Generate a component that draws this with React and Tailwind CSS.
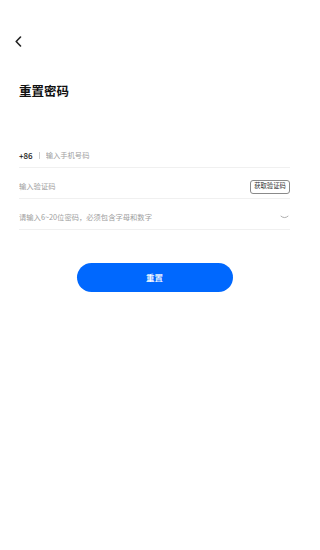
import { useState } from 'react';

const font = { fontFamily: '"Noto Sans CJK SC", "Noto Sans", sans-serif' };

function EyeClosed() {
  return (
    <svg width="9" height="5" viewBox="0 0 9 5" fill="none">
      <path d="M1 1.2 Q4.5 4.2 8 1.2" stroke="#9a9a9a" strokeWidth="0.8" strokeLinecap="round" />
    </svg>
  );
}

export default function App() {
  const [phone, setPhone] = useState('');
  const [code, setCode] = useState('');
  const [password, setPassword] = useState('');

  return (
    <div className="w-[309px] h-[550px] bg-white" style={font}>
      <div className="pt-[36px] pl-[14px]">
        <svg width="9" height="11" viewBox="0 0 9 11" fill="none">
          <path d="M6.5 1 L2.2 5.5 L6.5 10" stroke="#222" strokeWidth="1.6" strokeLinecap="round" strokeLinejoin="round" />
        </svg>
      </div>

      <h1 className="mt-[35px] ml-[19px] text-[12.5px] leading-[18px] font-bold text-[#111]">重置密码</h1>

      <div className="mx-[19px] mt-[37px] w-[271px]">
        {/* Phone */}
        <div className="h-[31px] pt-[7px] flex items-center border-b border-[#f0f0f0]">
          <span className="text-[8px] text-[#1a1a1a] font-medium">+86</span>
          <span className="mx-[6px] h-[7px] w-px bg-[#cfcfcf]"></span>
          <input
            value={phone}
            onChange={e => setPhone(e.target.value)}
            placeholder="输入手机号码"
            className="flex-1 text-[7.3px] text-[#222] placeholder:text-[#a0a0a0] outline-none bg-transparent"
          />
        </div>

        {/* Code */}
        <div className="h-[31px] pt-[7px] flex items-center border-b border-[#f0f0f0]">
          <input
            value={code}
            onChange={e => setCode(e.target.value)}
            placeholder="输入验证码"
            className="flex-1 text-[7.3px] text-[#222] placeholder:text-[#a0a0a0] outline-none bg-transparent"
          />
          <button className="h-[14px] w-[40px] border border-[#8a8a8a] rounded-[3px] text-[6.3px] leading-none text-[#333]">
            获取验证码
          </button>
        </div>

        {/* Password */}
        <div className="h-[31px] pt-[7px] flex items-center border-b border-[#f0f0f0]">
          <input
            type="password"
            value={password}
            onChange={e => setPassword(e.target.value)}
            placeholder="请输入6~20位密码，必须包含字母和数字"
            className="flex-1 text-[7.3px] text-[#222] placeholder:text-[#a0a0a0] outline-none bg-transparent"
          />
          <span className="pr-[1px]"><EyeClosed /></span>
        </div>
      </div>

      <div className="flex justify-center mt-[33px]">
        <button className="w-[156px] h-[29px] rounded-full bg-[#0068fe] text-white text-[8.5px] font-medium">
          重置
        </button>
      </div>
    </div>
  );
}
